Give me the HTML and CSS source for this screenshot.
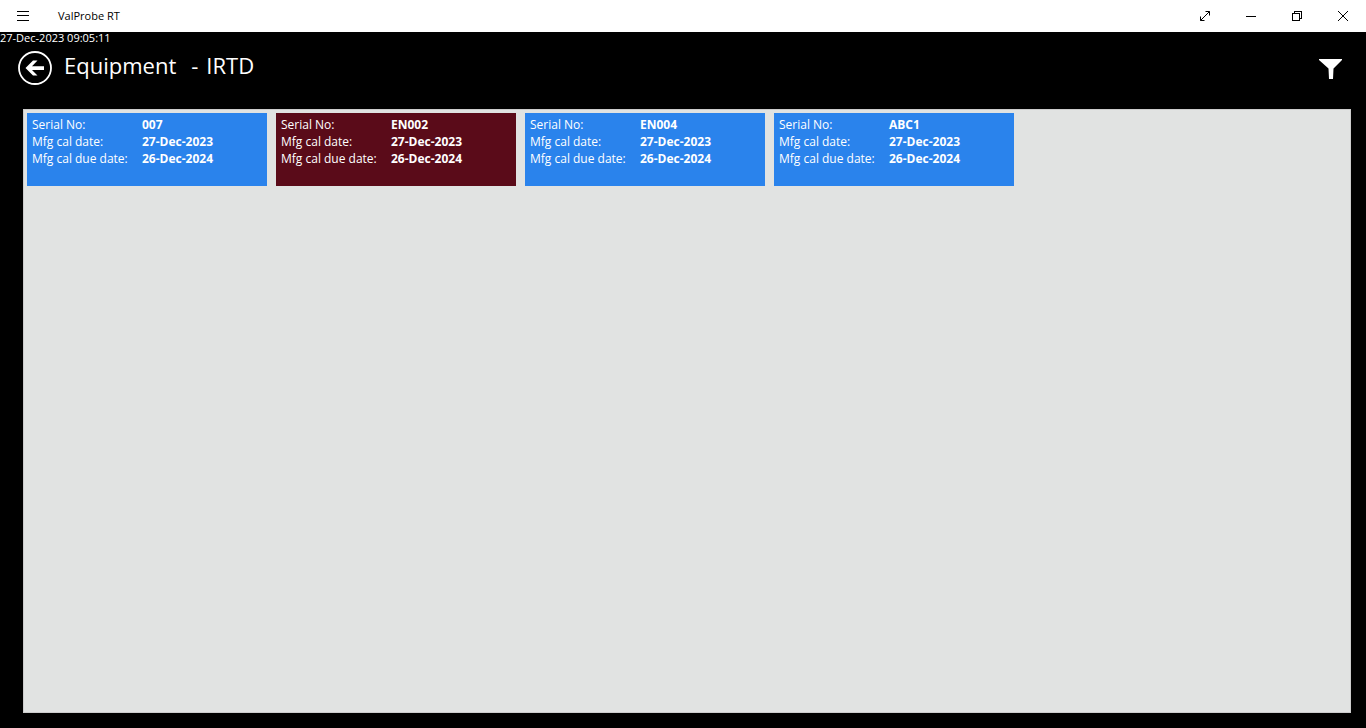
FILE: index.html
```html
<!DOCTYPE html>
<html lang="en">
<head>
<meta charset="utf-8">
<meta name="viewport" content="width=device-width, initial-scale=1">
<title>ValProbe RT</title>
<link rel="stylesheet" href="styles.css">
</head>
<body>
<div class="titlebar">
  <button class="bar-button" type="button" aria-label="Menu">
    <svg width="12" height="10" viewBox="0 0 12 10" shape-rendering="crispEdges"><path d="M0 .5h12M0 4.5h12M0 9.5h12"/></svg>
  </button>
  <span class="app-name">ValProbe RT</span>
  <button class="bar-button" type="button" aria-label="Full screen">
    <svg width="10" height="10" viewBox="0 0 10 10"><path d="M.5 9.5l9-9M5.500 .5h4v4M.5 5.500v4h4"/></svg>
  </button>
  <button class="bar-button" type="button" aria-label="Minimize">
    <svg width="10" height="10" viewBox="0 0 10 10" shape-rendering="crispEdges"><path d="M0 5.500h10"/></svg>
  </button>
  <button class="bar-button" type="button" aria-label="Restore">
    <svg width="10" height="10" viewBox="0 0 10 10" shape-rendering="crispEdges"><path d="M.5 2.500h7v7h-7zM2.500 2.500v-2h7v7h-2"/></svg>
  </button>
  <button class="bar-button" type="button" aria-label="Close">
    <svg width="10" height="10" viewBox="0 0 10 10"><path d="M0 0l10 10M10 0L0 10"/></svg>
  </button>
</div>
<main class="page">
  <time class="clock">27-Dec-2023 09:05:11</time>
  <header class="header">
    <button class="icon-button" type="button" aria-label="Back">
      <svg width="34" height="34" viewBox="0 0 34 34"><circle cx="17" cy="17" r="16" fill="none" stroke="#fff" stroke-width="1.800"/><path fill="#fff" d="M7.500 17L15 9.500h4.500L14 15.200h12v3.800H14l5.500 5.500H15z"/></svg>
    </button>
    <h1 class="heading"><span>Equipment</span><span class="type"><span>-</span><span>IRTD</span></span></h1>
    <button class="icon-button" type="button" aria-label="Filter">
      <svg width="23" height="22" viewBox="0 0 23 22"><path fill="#fff" d="M0 2h23v1l-8.500 8.500L14 22h-4l-.5-10.500L0 3z"/></svg>
    </button>
  </header>
  <section class="panel">
    <dl class="card">
      <dt>Serial No:</dt><dd>007</dd>
      <dt>Mfg cal date:</dt><dd>27-Dec-2023</dd>
      <dt>Mfg cal due date:</dt><dd>26-Dec-2024</dd>
    </dl>
    <dl class="card card-alert">
      <dt>Serial No:</dt><dd>EN002</dd>
      <dt>Mfg cal date:</dt><dd>27-Dec-2023</dd>
      <dt>Mfg cal due date:</dt><dd>26-Dec-2024</dd>
    </dl>
    <dl class="card">
      <dt>Serial No:</dt><dd>EN004</dd>
      <dt>Mfg cal date:</dt><dd>27-Dec-2023</dd>
      <dt>Mfg cal due date:</dt><dd>26-Dec-2024</dd>
    </dl>
    <dl class="card">
      <dt>Serial No:</dt><dd>ABC1</dd>
      <dt>Mfg cal date:</dt><dd>27-Dec-2023</dd>
      <dt>Mfg cal due date:</dt><dd>26-Dec-2024</dd>
    </dl>
  </section>
</main>
</body>
</html>
```
FILE: styles.css
```css
* { box-sizing: border-box; }
body {
  margin: 0;
  min-height: 100vh;
  display: flex;
  flex-direction: column;
  background: #000;
  color: #fff;
  font: 12px/12px "Segoe UI", "Open Sans", "Noto Sans", sans-serif;
}
button {
  padding: 0;
  border: 0;
  background: none;
  color: inherit;
}
svg { display: block; }
.titlebar {
  display: flex;
  align-items: center;
  height: 32px;
  background: #fff;
  color: #000;
}
.bar-button {
  display: flex;
  align-items: center;
  justify-content: center;
  width: 46px;
  height: 32px;
}
.bar-button path {
  fill: none;
  stroke: #000;
}
.app-name {
  flex: 1;
  padding-left: 12px;
  font-size: 11px;
}
.page {
  flex: 1;
  display: flex;
  flex-direction: column;
}
.clock { font-size: 11px; }
.header {
  display: flex;
  align-items: center;
  gap: 12px;
  height: 48px;
  padding: 0 24px 0 18px;
}
.heading {
  flex: 1;
  display: flex;
  gap: 15px;
  margin: 0;
  padding-bottom: 6px;
  font-size: 22px;
  line-height: 28px;
  font-weight: 400;
}
.type {
  display: flex;
  gap: 8px;
}
.panel {
  flex: 1;
  display: flex;
  flex-wrap: wrap;
  align-content: flex-start;
  gap: 9px;
  margin: 17px 15px 15px 23px;
  padding: 3px;
  border: 1px solid #ccc;
  background: #e1e3e2;
}
.card {
  display: grid;
  grid-template-columns: 110px 1fr;
  align-content: start;
  width: 240px;
  height: 73px;
  margin: 0;
  padding: 3px 5px;
  background: #2a83ec;
  line-height: 17px;
}
.card-alert { background: #5a0b19; }
.card dd {
  margin: 0;
  font-weight: 700;
}
```
